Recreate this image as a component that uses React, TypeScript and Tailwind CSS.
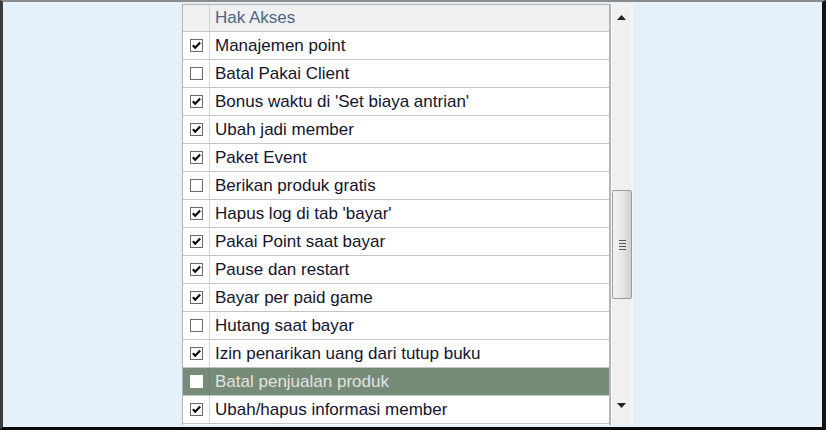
import React from "react";

const rows: { label: string; checked: boolean; selected?: boolean }[] = [
  { label: "Manajemen point", checked: true },
  { label: "Batal Pakai Client", checked: false },
  { label: "Bonus waktu di 'Set biaya antrian'", checked: true },
  { label: "Ubah jadi member", checked: true },
  { label: "Paket Event", checked: true },
  { label: "Berikan produk gratis", checked: false },
  { label: "Hapus log di tab 'bayar'", checked: true },
  { label: "Pakai Point saat bayar", checked: true },
  { label: "Pause dan restart", checked: true },
  { label: "Bayar per paid game", checked: true },
  { label: "Hutang saat bayar", checked: false },
  { label: "Izin penarikan uang dari tutup buku", checked: true },
  { label: "Batal penjualan produk", checked: false, selected: true },
  { label: "Ubah/hapus informasi member", checked: true },
];

function Check({ checked, selected }: { checked: boolean; selected?: boolean }) {
  return (
    <svg width="13" height="13" viewBox="0 0 13 13">
      <rect
        x="0.5"
        y="0.5"
        width="12"
        height="12"
        fill="#ffffff"
        stroke={selected ? "#ffffff" : "#6a6a6a"}
      />
      {checked && (
        <path d="M2.8 6.2 L5.2 8.7 L10.2 3.5" fill="none" stroke="#000" strokeWidth="2.1" />
      )}
    </svg>
  );
}

export default function App() {
  return (
    <div
      className="w-[826px] h-[430px] bg-[#e4f1fb] border-l-[3px] border-l-[#3a3a3a] border-t-[2px] border-t-[#8a8a8a] border-r-[4px] border-r-[#141414] border-b-[3px] border-b-[#0a0a0a] pl-[179px] pt-[2px] overflow-hidden"
      style={{ fontFamily: '"Liberation Sans", Arial, sans-serif' }}
    >
      <div className="flex w-[451px] h-[421px] overflow-hidden">
        <div className="w-[429px] border-l border-t border-r-2 border-[#b4b4b4] bg-white">
          <div className="flex h-[27px] border-b border-[#c4c4c4] bg-[#f0f0f0]">
            <div className="w-[27px] border-r border-[#cfcfcf]" />
            <div className="flex-1 flex items-center pl-[5px] text-[17px] text-[#4d6585]">
              Hak Akses
            </div>
          </div>
          {rows.map((r) => (
            <div
              key={r.label}
              className={
                r.selected
                  ? "flex h-[28px] border-b border-[#c4c4c4] bg-[#768b78]"
                  : "flex h-[28px] border-b border-[#c4c4c4] bg-white"
              }
            >
              <div
                className={
                  r.selected
                    ? "w-[27px] flex items-center justify-center border-r border-[#6a7f6c]"
                    : "w-[27px] flex items-center justify-center border-r border-[#d4d4d4]"
                }
              >
                <Check checked={r.checked} selected={r.selected} />
              </div>
              <div
                className={
                  r.selected
                    ? "flex-1 flex items-center pl-[5px] text-[17px] text-[#e2e2e2]"
                    : "flex-1 flex items-center pl-[5px] text-[17px] text-[#14142e]"
                }
              >
                {r.label}
              </div>
            </div>
          ))}
        </div>
        <div className="w-[22px] bg-[#f0f0f0] border-l border-white border-r-2 border-r-[#f7f7f7] flex flex-col items-center">
          <div className="h-[27px] flex items-center justify-center">
            <svg width="9" height="5" viewBox="0 0 9 5">
              <path d="M0 5 L4.5 0 L9 5 Z" fill="#222" />
            </svg>
          </div>
          <div className="flex-1 w-full flex flex-col pt-[159px]">
            <div className="w-[20px] h-[109px] rounded-[2px] border border-[#9c9c9c] bg-gradient-to-r from-[#f4f4f4] via-[#e6e6e6] to-[#cfcfcf] flex items-center justify-center">
              <div className="flex flex-col gap-[2px]">
                <div className="w-[7px] h-[1px] bg-[#555]" />
                <div className="w-[7px] h-[1px] bg-[#555]" />
                <div className="w-[7px] h-[1px] bg-[#555]" />
                <div className="w-[7px] h-[1px] bg-[#555]" />
              </div>
            </div>
          </div>
          <div className="h-[24px] flex items-start justify-center pt-[2px]">
            <svg width="9" height="5" viewBox="0 0 9 5">
              <path d="M0 0 L4.5 5 L9 0 Z" fill="#222" />
            </svg>
          </div>
        </div>
      </div>
    </div>
  );
}
